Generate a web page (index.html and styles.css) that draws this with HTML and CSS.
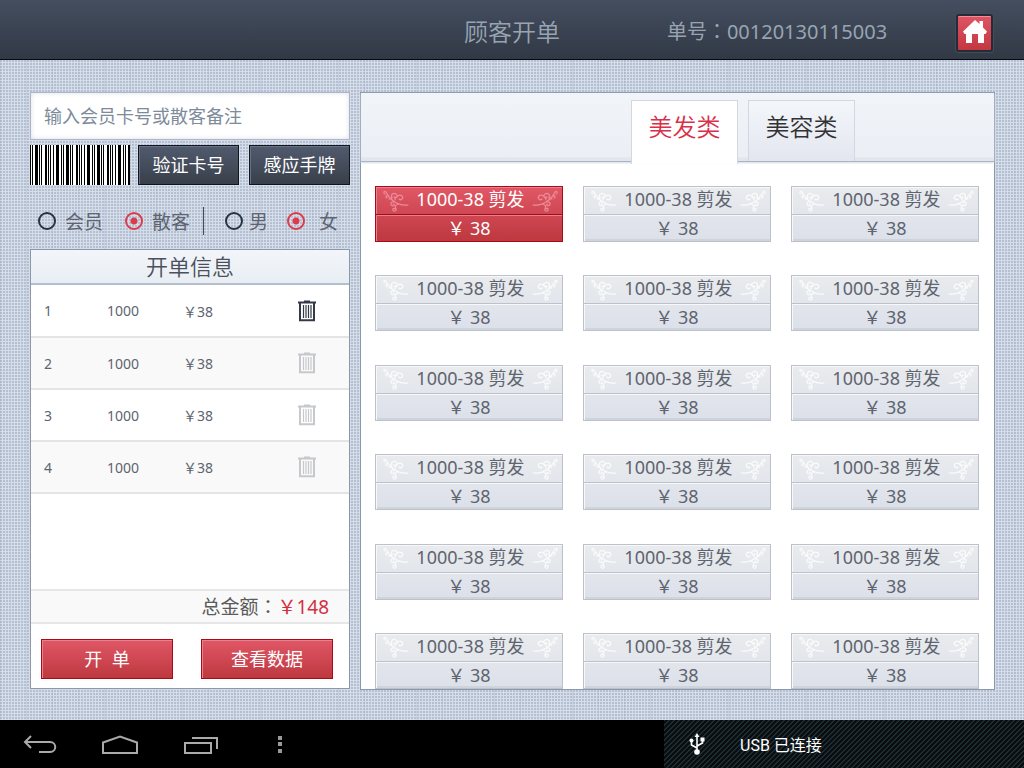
FILE: index.html
```html
<!DOCTYPE html>
<html lang="zh-CN">

<head>
    <meta charset="UTF-8">
    <meta name="viewport" content="width=device-width, initial-scale=1.0">
    <title>顾客开单</title>
    <link rel="stylesheet" href="styles.css">
</head>

<body>
    <!-- shared icons -->
    <svg class="sprite" aria-hidden="true">
        <symbol id="trash" viewBox="0 0 20 22">
            <path d="M1 2.500h18M7 1.500h6M3 3v17.200h14V3" fill="none" stroke="currentColor" stroke-width="2" />
            <path d="M6.500 5v13M9 5v13M11.500 5v13M14 5v13" fill="none" stroke="currentColor" stroke-width="1.200" />
        </symbol>
        <symbol id="flourish" viewBox="0 0 26 22">
            <g fill="none" stroke="currentColor" stroke-width="1.2" stroke-linecap="round">
                <path d="M2 4c-2-1-1-4 1-2 2 3 2 5 6 8 5 4 9 6 16 5" />
                <path d="M4 8c-2-1-1-3 1-2M6 9c1 0 3-1 3-2" />
                <path d="M9 9c-2-4 1-7 4-5 3 2 0 5-2 3" />
                <path d="M12 10c0-4 5-6 7-4s-1 5-3 3" />
                <path d="M11 12c-4-1-4 4-1 4 2 0 2-2 0-2" />
                <path d="M15 14c-3 1-3 3-2 5 1 3-4 3-3 0 0-1 2-1 2 0" />
            </g>
        </symbol>
    </svg>

    <header class="topbar">
        <h1 class="topbar-title">顾客开单</h1>
        <div class="order-no" lang="zh-Hant">单号：00120130115003</div>
        <a class="home" href="#" aria-label="首页">
            <svg width="26" height="26" viewBox="0 0 26 26">
                <path d="M13 1l4.500 4V2H21v6.500l4 4-1.500 2.500H22v9h-6v-9h-6v9H4v-9H2.500L1 12.500z" fill="#fff" />
            </svg>
        </a>
    </header>

    <main class="content">
        <form class="sidebar">
            <input class="card-input" type="text" aria-label="会员卡号" placeholder="输入会员卡号或散客备注">

            <div class="verify">
                <div class="barcode"></div>
                <button class="btn btn-dark" type="button">验证卡号</button>
                <button class="btn btn-dark" type="button">感应手牌</button>
            </div>

            <div class="options">
                <div class="option-group">
                    <label><input type="radio" name="customer" value="member">会员</label>
                    <label><input type="radio" name="customer" value="guest" checked>散客</label>
                </div>
                <div class="option-group">
                    <label class="narrow"><input type="radio" name="gender" value="male">男</label>
                    <label class="wide"><input type="radio" name="gender" value="female" checked>女</label>
                </div>
            </div>

            <section class="bill">
                <h2 class="bill-title">开单信息</h2>
                <table class="bill-table">
                    <tbody id="billRows"></tbody>
                </table>
                <div class="total" lang="zh-Hant">总金额：<span class="total-price">￥148</span></div>
                <div class="actions">
                    <button class="btn btn-red" type="button">开&nbsp; 单</button>
                    <button class="btn btn-red" type="button">查看数据</button>
                </div>
            </section>
        </form>

        <section class="services">
            <nav class="tabs">
                <button class="tab active" type="button">美发类</button>
                <button class="tab" type="button">美容类</button>
            </nav>
            <div class="grid" id="grid"></div>
        </section>
    </main>

    <footer class="system">
        <nav class="system-nav">
            <button type="button" aria-label="返回">
                <svg width="34" height="20" viewBox="0 0 34 20">
                    <path d="M8 2L2 8l6 6M2 8h25c7 0 7 10 0 10H16" fill="none" stroke="#aaa" stroke-width="2" />
                </svg>
            </button>
            <button type="button" aria-label="主页">
                <svg width="38" height="20" viewBox="0 0 38 20">
                    <path d="M2 19V8.500L19 2.500l17 6V19z" fill="none" stroke="#aaa" stroke-width="2" />
                </svg>
            </button>
            <button type="button" aria-label="最近任务">
                <svg width="36" height="20" viewBox="0 0 36 20">
                    <path d="M3 9h26v10H3zM10 4h25v11" fill="none" stroke="#aaa" stroke-width="2" />
                </svg>
            </button>
            <button type="button" aria-label="菜单">
                <svg width="4" height="18" viewBox="0 0 4 18">
                    <path d="M0 1h4v4H0zM0 7h4v4H0zM0 14h4v4H0z" fill="#999" />
                </svg>
            </button>
        </nav>
        <div class="notice">
            <svg width="16" height="22" viewBox="0 0 16 22">
                <path d="M8 3v15M8 15l-5.500-3V8M8 13l5.500-3V7" fill="none" stroke="#fff" stroke-width="1.600" />
                <path d="M8 0l2.500 4h-5zM11.500 4.500h4v4h-4z" fill="#fff" />
                <circle cx="2.500" cy="7.500" r="2" fill="#fff" />
                <circle cx="8" cy="19" r="2.800" fill="#fff" />
            </svg>
            <span>USB 已连接</span>
        </div>
    </footer>

    <script>
        const rows = document.getElementById('billRows');
        for (let i = 1; i <= 4; i++) {
            rows.innerHTML += `
                <tr>
                    <td class="col-no">${i}</td>
                    <td class="col-code">1000</td>
                    <td class="col-price">￥38</td>
                    <td class="col-del">
                        <button class="delete" type="button" aria-label="删除"><svg width="20" height="22"><use href="#trash" /></svg></button>
                    </td>
                </tr>`;
        }

        const grid = document.getElementById('grid');
        for (let i = 0; i < 18; i++) {
            grid.innerHTML += `
                <button class="service${i === 0 ? ' selected' : ''}" type="button">
                    <span class="service-name">
                        <svg class="flourish" width="26" height="22"><use href="#flourish" /></svg>
                        1000-38 剪发
                        <svg class="flourish flip" width="26" height="22"><use href="#flourish" /></svg>
                    </span>
                    <span class="service-price">￥ 38</span>
                </button>`;
        }

        // Switch tabs and selected service
        function selectOne(selector, name) {
            document.querySelectorAll(selector).forEach(el => {
                el.addEventListener('click', () => {
                    document.querySelectorAll(selector).forEach(other => other.classList.remove(name));
                    el.classList.add(name);
                });
            });
        }
        selectOne('.tab', 'active');
        selectOne('.service', 'selected');
    </script>
</body>

</html>
```
FILE: styles.css
```css
* {
    box-sizing: border-box;
}

body {
    display: flex;
    flex-direction: column;
    height: 100vh;
    margin: 0;
    font-family: "Noto Sans", "Noto Sans CJK SC", sans-serif;
    color: #5e6470;
    background-color: #d3dee8;
    background-image:
        linear-gradient(90deg, rgba(150, 160, 180, .2) 1px, transparent 1px),
        radial-gradient(circle at 1px 1px, #b6bed3 1px, transparent 1px);
    background-size: 26px 26px, 3px 3px;
}

button,
input {
    font-family: inherit;
}

button {
    padding: 0;
    cursor: pointer;
}

.sprite {
    display: none;
}

/* Header */
.topbar {
    display: grid;
    grid-template-columns: 1fr auto 1fr;
    align-items: center;
    height: 60px;
    padding: 4px 30px 0;
    flex-shrink: 0;
    color: #98a4b3;
    background: linear-gradient(#454e60, #313945);
    border-bottom: 1px solid #050a12;
    position: relative;
}

.topbar-title {
    grid-column: 2;
    margin: 0;
    font-size: 24px;
    font-weight: 350;
    line-height: 32px;
}

.order-no {
    justify-self: center;
    font-family: "Noto Sans", "Noto Sans CJK TC", sans-serif;
    font-size: 20px;
    line-height: 32px;
}

.home {
    position: absolute;
    top: 14px;
    right: 31px;
    display: flex;
    align-items: center;
    justify-content: center;
    width: 37px;
    height: 38px;
    padding-bottom: 2px;
    background: linear-gradient(#e05563, #c23740);
    border: 2px solid #252c38;
    border-radius: 3px;
    box-shadow: inset 0 1px #f58c9b, 0 0 0 1px #444c59;
}

/* Main area */
.content {
    display: flex;
    flex: 1;
    gap: 10px;
    min-height: 0;
    padding: 32px 29px 30px 30px;
}

.sidebar {
    display: flex;
    flex-direction: column;
    width: 320px;
    padding-bottom: 1px;
    flex-shrink: 0;
}

.card-input {
    height: 48px;
    padding: 0 13px;
    font-size: 18px;
    color: #5e6470;
    background: #fff;
    border: 1px solid #aeb3c8;
    border-radius: 0;
    box-shadow: inset 0 0 5px #dfdfe6;
}

.card-input::placeholder {
    color: #7d8b9a;
    opacity: 1;
}

.verify {
    display: flex;
    align-items: center;
    gap: 10px;
    margin-top: 5px;
}

.barcode {
    width: 100px;
    height: 40px;
    margin-right: -2px;
    background: repeating-linear-gradient(90deg,
            #000 0 1px, #fff 1px 2px, #000 2px 3px, #fff 3px 5px,
            #000 5px 8px, #fff 8px 9px, #000 9px 10px, #fff 10px 11px,
            #000 11px 12px, #fff 12px 15px, #000 15px 17px, #fff 17px 18px,
            #000 18px 19px, #fff 19px 20px, #000 20px 21px, #fff 21px 23px,
            #000 23px 24px, #fff 24px 26px, #000 26px 29px, #fff 29px 31px);
}

.btn {
    height: 40px;
    padding-bottom: 3px;
    font-size: 18px;
    color: #fff;
}

.btn-dark {
    flex: 1;
    background: linear-gradient(#515b6e, #393f4a);
    border: 1px solid #11151d;
    box-shadow: inset 1px 1px #687287;
}

.btn-red {
    flex: 1;
    background: linear-gradient(#e15766, #bd383f);
    border: 1px solid #a80a17;
    box-shadow: inset 1px 1px #e4838f;
}

.options {
    display: flex;
    align-items: center;
    height: 64px;
    padding: 8px 12px 0 8px;
}

.option-group {
    display: flex;
    flex: 1;
    justify-content: space-between;
}

.option-group:first-child {
    flex: none;
    gap: 22px;
    margin-right: 21px;
    padding-right: 13px;
    border-right: 1px solid #454b58;
}

.options label {
    display: flex;
    align-items: center;
    gap: 9px;
    font-size: 19px;
}

.options label.narrow {
    gap: 6px;
}

.options label.wide {
    gap: 14px;
}

.options input {
    appearance: none;
    width: 18px;
    height: 18px;
    margin: 0;
    border: 2px solid #273341;
    border-radius: 50%;
}

.options input:checked {
    border-color: #dc3b4b;
    background: radial-gradient(circle, #dc3b4b 3px, transparent 4px);
}

/* Bill */
.bill {
    display: flex;
    flex-direction: column;
    flex: 1;
    background: #fff;
    border: 1px solid #8c98aa;
}

.bill-title {
    height: 35px;
    margin: 0;
    font-size: 22px;
    font-weight: 350;
    line-height: 32px;
    text-align: center;
    color: #4b505c;
    background: linear-gradient(#f2f6fa, #e9eef4);
    border-bottom: 2px solid #b3bfca;
}

.bill-table {
    width: 100%;
    border-collapse: collapse;
    table-layout: fixed;
    font-size: 14px;
}

.bill-table tr {
    height: 52px;
    border-bottom: 2px solid #e4e4e4;
}

.bill-table tr:nth-child(even) {
    background: #f9f9f9;
}

.bill-table td {
    padding: 0;
}

.bill-table .col-no {
    width: 76px;
    padding-left: 13px;
}

.bill-table .col-code {
    width: 76px;
}

.bill-table .col-del {
    width: 86px;
}

.delete {
    display: block;
    height: 22px;
    margin-left: 34px;
    color: #c7c8cc;
    background: none;
    border: none;
}

tr:first-child .delete {
    color: #333947;
}

.total {
    height: 35px;
    margin-top: auto;
    padding-right: 20px;
    font-family: "Noto Sans", "Noto Sans CJK TC", sans-serif;
    font-size: 19px;
    line-height: 32px;
    text-align: right;
    color: #5b5b5b;
    background: #f9f9f9;
    border-top: 2px solid #e6e6e6;
    border-bottom: 2px solid #e6e6e6;
}

.total-price {
    color: #d32f41;
}

.actions {
    display: flex;
    gap: 28px;
    padding: 15px 16px 9px 10px;
}

/* Services */
.services {
    display: flex;
    flex-direction: column;
    flex: 1;
    min-width: 0;
    background: #fff;
    border: 1px solid #8c98aa;
}

.tabs {
    display: flex;
    justify-content: flex-end;
    gap: 10px;
    height: 69px;
    padding: 7px 139px 0 0;
    flex-shrink: 0;
    background: linear-gradient(#f1f5fa, #ebeff5 64px, #e2e6ec 65px);
    border-bottom: 1px solid #a9b5c5;
    box-shadow: 0 1px 2px #d5dae1;
}

.tab {
    width: 107px;
    padding-bottom: 12px;
    font-size: 24px;
    font-weight: 350;
    color: #333;
    background: linear-gradient(#f3f6fa, #e3e6ef);
    border: 1px solid #d2d7e0;
    border-bottom: none;
}

.tab.active {
    margin-bottom: -3px;
    padding-bottom: 15px;
    color: #d9304a;
    background: #fff;
}

.grid {
    display: grid;
    grid-template-columns: repeat(3, 1fr);
    align-content: space-between;
    column-gap: 20px;
    flex: 1;
    padding: 24px 15px 0 14px;
}

.service {
    display: flex;
    flex-direction: column;
    height: 56px;
    font-size: 18px;
    color: #5e6470;
    background: linear-gradient(#e9ebed, #dce0ea);
    border: 1px solid #bcc1cc;
    box-shadow: inset 1px 1px #f7f8fa, inset 0 -2px #cfd3da;
}

.service-name {
    display: flex;
    align-items: center;
    justify-content: space-between;
    width: 100%;
    height: 28px;
    padding: 0 4px 3px 7px;
    line-height: 24px;
    border-bottom: 1px solid #bcc1cc;
}

.service-price {
    width: 100%;
    height: 26px;
    line-height: 24px;
    border-top: 1px solid #f7f8fa;
}

.flourish {
    margin-top: 3px;
    color: #fafbfc;
}

.flip {
    transform: scaleX(-1);
}

.service.selected {
    color: #fff;
    background: linear-gradient(#e15766, #bd383f);
    border-color: #a80a17;
    box-shadow: inset 1px 1px #e4838f;
}

.selected .service-name {
    border-color: #a80a17;
}

.selected .service-price {
    border-color: #e4838f;
}

.selected .flourish {
    color: #ec8b97;
}

/* System bar */
.system {
    display: flex;
    height: 48px;
    flex-shrink: 0;
    background: #000;
}

.system-nav {
    display: flex;
    align-items: center;
    flex: 1;
}

.system-nav button {
    display: flex;
    justify-content: center;
    width: 80px;
    background: none;
    border: none;
}

.notice {
    display: flex;
    align-items: center;
    gap: 35px;
    width: 360px;
    padding-left: 25px;
    font-family: Roboto, "Noto Sans CJK SC", sans-serif;
    font-size: 16px;
    color: #fff;
    background: linear-gradient(135deg, #1a2c34 12.5%, #0c0d0e 12.5% 50%, #1a2c34 50% 62.5%, #0c0d0e 62.5%) 0 0 / 5px 5px;
}
```
